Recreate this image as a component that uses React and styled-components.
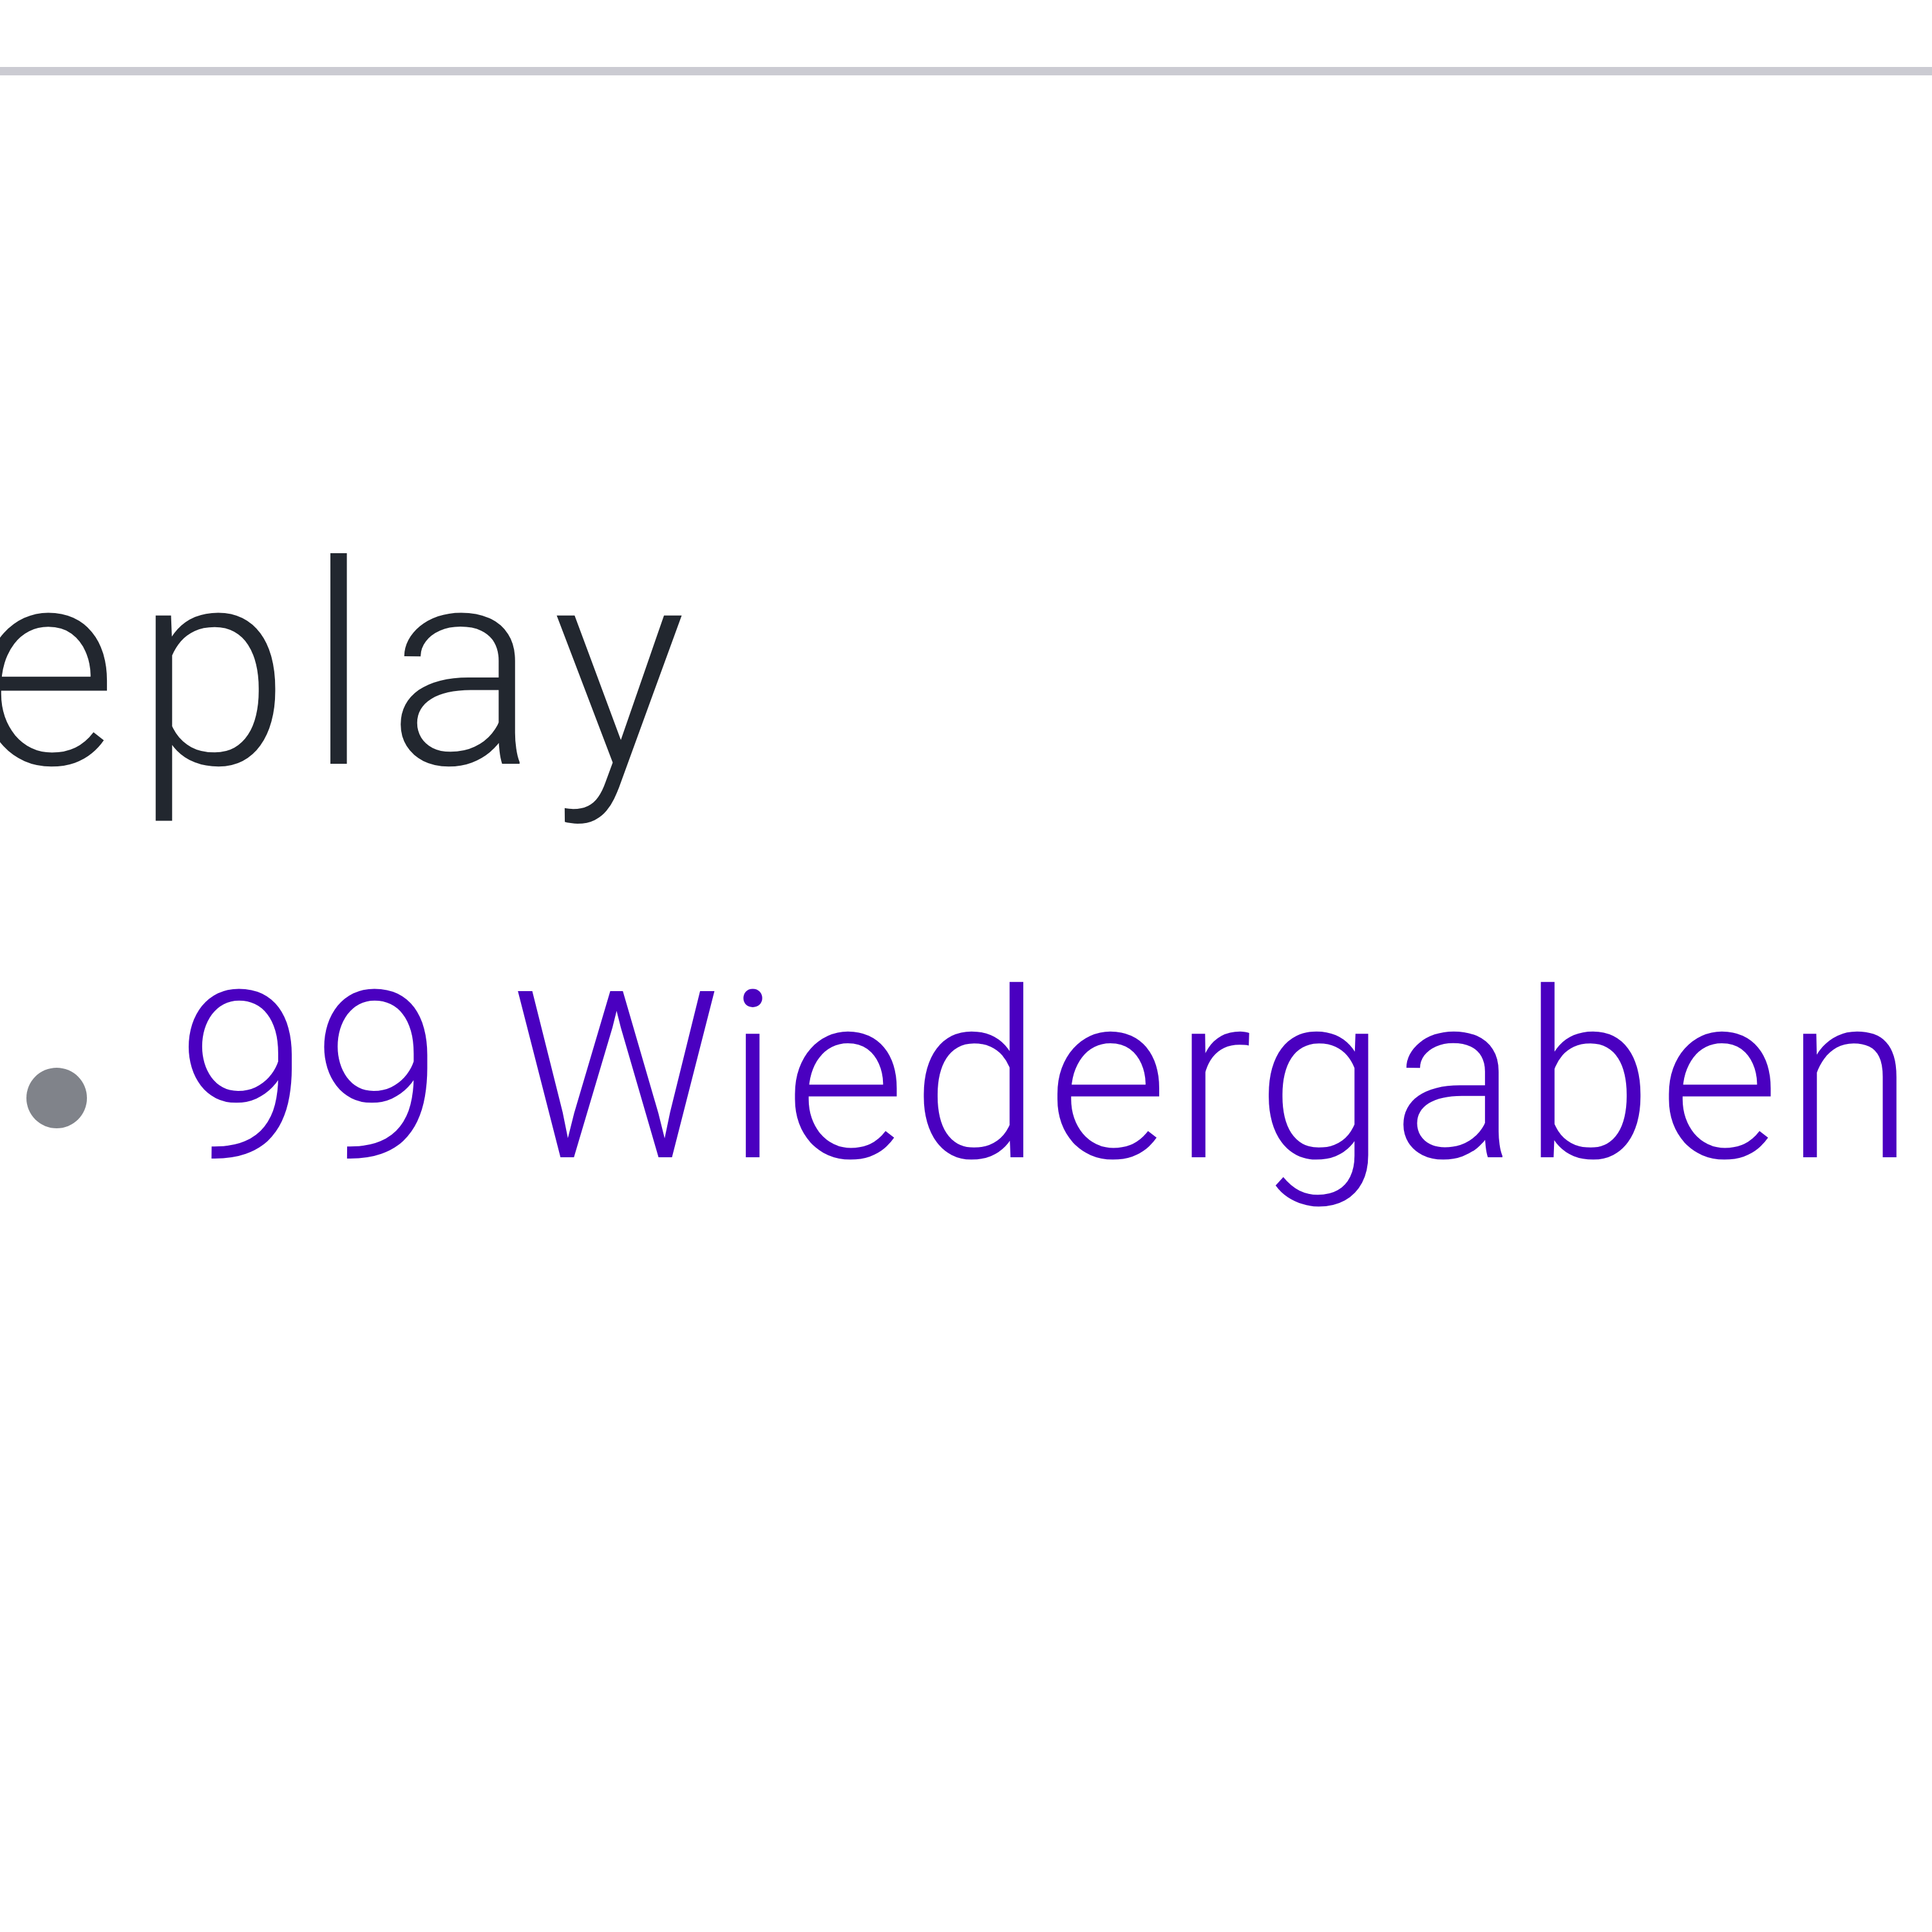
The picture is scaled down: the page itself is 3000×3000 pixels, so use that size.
import React from "react";
import styled, { createGlobalStyle } from "styled-components";

const GlobalStyle = createGlobalStyle`
  html, body {
    margin: 0;
    padding: 0;
    background: #ffffff;
  }
  body {
    font-family: Roboto, "Noto Sans", sans-serif;
    overflow: hidden;
  }
`;

const Page = styled.div`
  width: 3000px;
  height: 3000px;
  overflow: hidden;
  padding-top: 104px;
  box-sizing: border-box;
`;

const Divider = styled.hr`
  margin: 0;
  border: 0;
  height: 13px;
  background: #cbcbd2;
`;

const Info = styled.div`
  display: flex;
  flex-direction: column;
  margin-top: 702px;
`;

const Title = styled.h2`
  margin: 0 0 0 -346px;
  font-size: 436px;
  font-weight: 300;
  letter-spacing: 0.06em;
  line-height: 1;
  color: #22272f;
  white-space: nowrap;
`;

const Meta = styled.div`
  display: flex;
  align-items: center;
  margin-top: 237px;
  font-size: 363px;
  font-weight: 300;
  letter-spacing: 0.025em;
  line-height: 1;
  white-space: nowrap;
`;

const Dot = styled.span`
  width: 94px;
  height: 94px;
  border-radius: 50%;
  background: #80838a;
  margin: 63px 140px 0 41px;
  flex-shrink: 0;
`;

const Views = styled.a`
  color: #4a00c0;
  text-decoration: none;
`;

export default function App() {
  return (
    <>
      <GlobalStyle />
      <Page>
        <Divider />
        <Info>
          <Title>Replay</Title>
          <Meta>
            <Dot />
            <Views href="#">99 Wiedergaben</Views>
          </Meta>
        </Info>
      </Page>
    </>
  );
}
